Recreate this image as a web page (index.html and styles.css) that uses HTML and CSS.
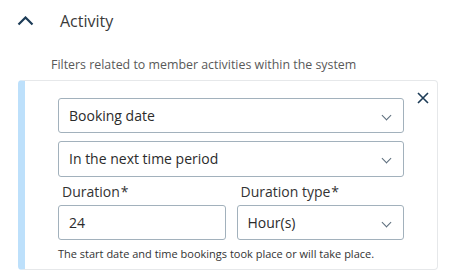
FILE: index.html
```html
<!DOCTYPE html>
<html lang="en">
<head>
    <meta charset="UTF-8">
    <title>Activity filter</title>
    <link rel="stylesheet" href="styles.css">
</head>
<body>
    <div class="filter-group">
        <div class="filter-group__header">
            <svg class="filter-group__toggle" width="17" height="10" viewBox="0 0 17 10">
                <path d="M1.5 8.5 L8.5 1.5 L15.5 8.5" fill="none" stroke="#1d3c57" stroke-width="2.2"/>
            </svg>
            <span class="filter-group__title">Activity</span>
        </div>
        <p class="filter-group__desc">Filters related to member activities within the system</p>

        <div class="filter-card">
            <span class="filter-card__close">
                <svg width="12" height="12" viewBox="0 0 12 12">
                    <path d="M1 1 L11 11 M11 1 L1 11" stroke="#1d3c57" stroke-width="1.6"/>
                </svg>
            </span>
            <div class="field">
                <div class="select">Booking date<i class="select__arrow"></i></div>
            </div>
            <div class="field">
                <div class="select select--tall">In the next time period<i class="select__arrow"></i></div>
            </div>
            <div class="field-row">
                <div class="field">
                    <label class="field__label">Duration<span class="req">*</span></label>
                    <div class="input">24</div>
                </div>
                <div class="field">
                    <label class="field__label">Duration type<span class="req">*</span></label>
                    <div class="select">Hour(s)<i class="select__arrow"></i></div>
                </div>
            </div>
            <p class="filter-card__help">The start date and time bookings took place or will take place.</p>
        </div>
    </div>
</body>
</html>
```

FILE: styles.css
```css
body{
    margin: 0;
    font-family: "Open Sans", "Noto Sans", sans-serif;
    color: #333;
    background: #fff;
}
.filter-group{
    padding-top: 10px;
}
.filter-group__header{
    display: flex;
    align-items: center;
    height: 22px;
    padding-left: 17px;
}
.filter-group__toggle{
    display: block;
}
.filter-group__title{
    margin-left: 26px;
    font-size: 16px;
    color: #3a3a3a;
}
.filter-group__desc{
    margin: 0;
    padding: 24px 0 0 51px;
    height: 24px;
    font-size: 12.4px;
    color: #595959;
}
.filter-card{
    position: relative;
    margin-left: 18px;
    width: 420px;
    box-sizing: border-box;
    border: 1px solid #e6e8ea;
    border-left: 7px solid #bde0fb;
    border-radius: 4px;
    padding: 17px 33px 7px 33px;
}
.filter-card__close{
    position: absolute;
    top: 11px;
    right: 8px;
    line-height: 0;
}
.field{
    margin-bottom: 8px;
}
.field-row{
    display: flex;
    gap: 11px;
}
.field-row .field{
    flex: 1;
    margin-bottom: 0;
}
.field__label{
    display: block;
    height: 20px;
    padding-left: 4px;
    font-size: 14px;
    line-height: 14px;
    color: #333;
}
.req{
    margin-left: 1px;
}
.select,
.input{
    position: relative;
    height: 35px;
    box-sizing: border-box;
    border: 1px solid #a2b1bc;
    border-radius: 3px;
    padding-left: 10px;
    font-size: 14px;
    line-height: 33px;
    color: #2b2b2b;
}
.select--tall{
    height: 36px;
    line-height: 34px;
}
.select__arrow{
    position: absolute;
    right: 13px;
    top: 13px;
    width: 6px;
    height: 6px;
    border-right: 1.3px solid #5c6d7c;
    border-bottom: 1.3px solid #5c6d7c;
    transform: rotate(45deg);
}
.filter-card__help{
    margin: 6px 0 0 0;
    font-size: 11px;
    line-height: 16px;
    color: #333;
}
```
